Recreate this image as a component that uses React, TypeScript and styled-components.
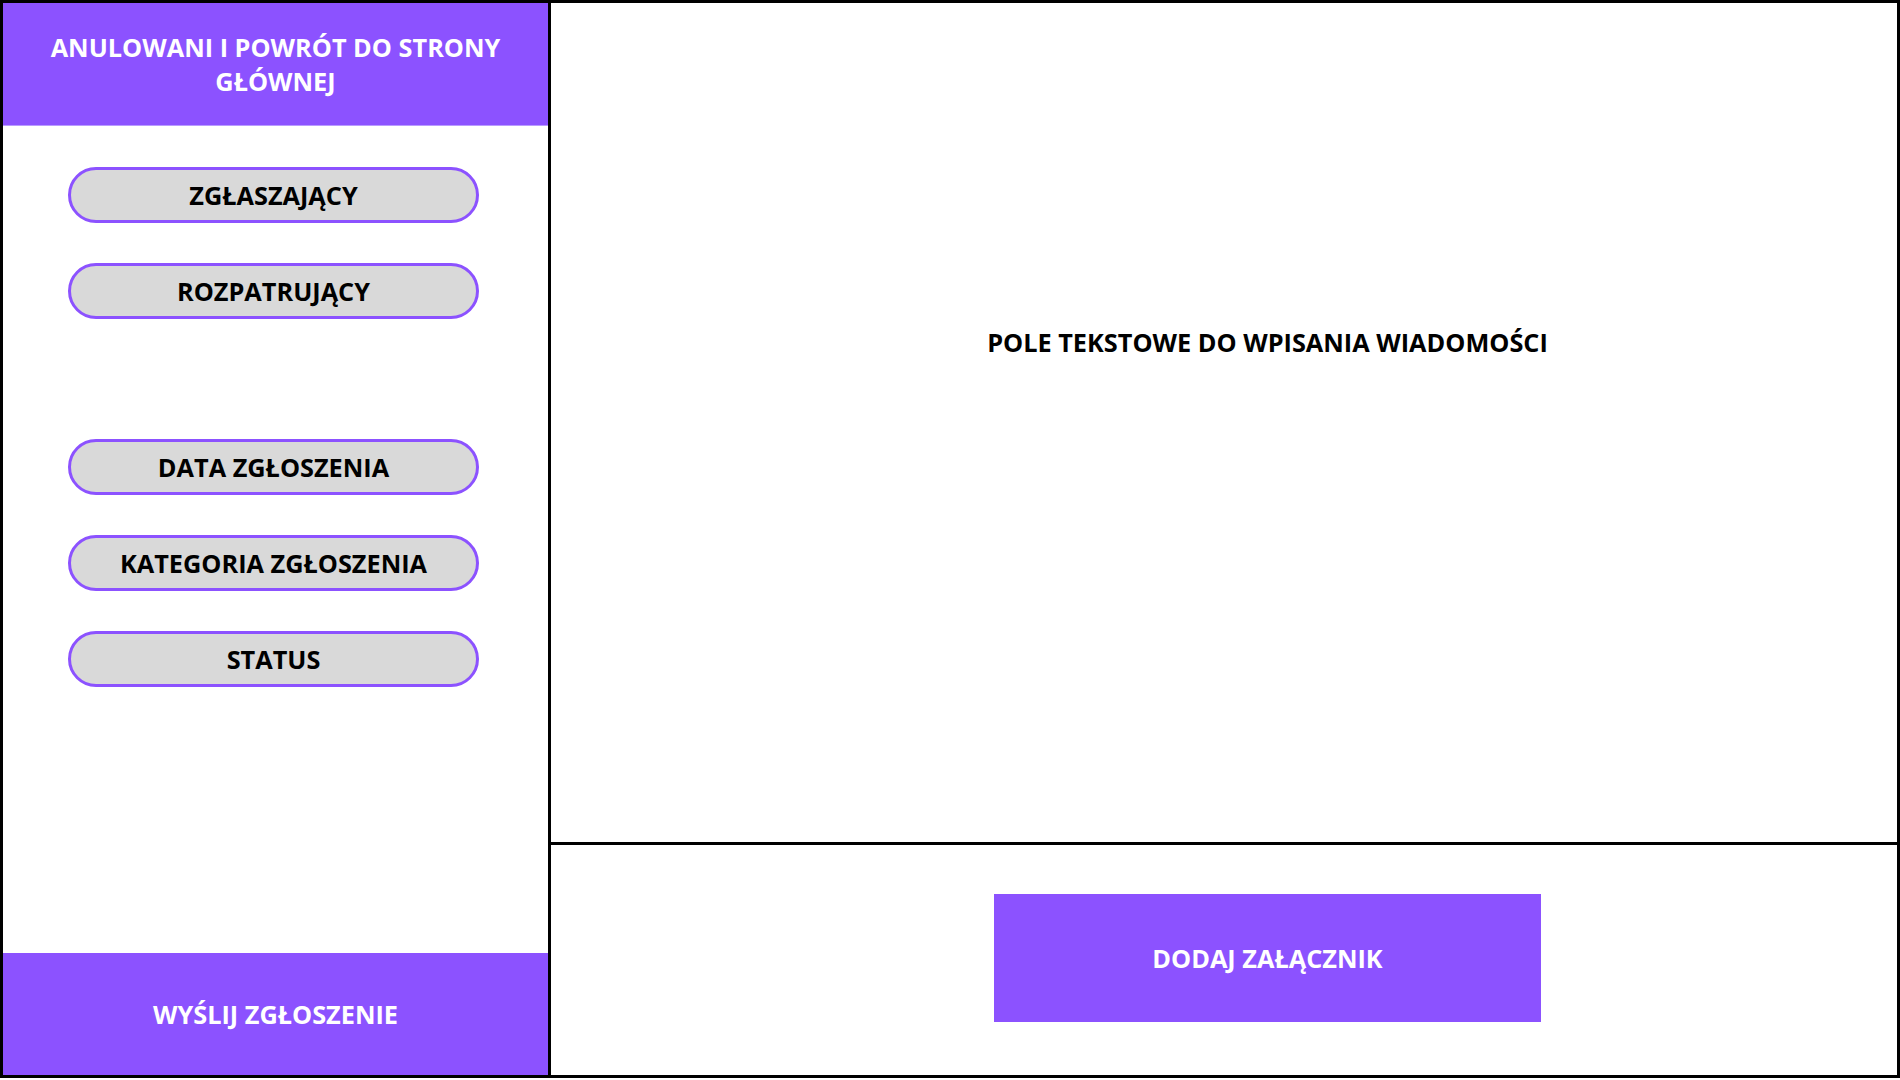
import React from "react";
import styled, { createGlobalStyle } from "styled-components";

const PURPLE = "#8c52ff";
const FONT_SIZE = "25.3px";

const Global = createGlobalStyle`
  html, body { margin: 0; padding: 0; background: #ffffff; }
  body { font-family: "Open Sans", "Liberation Sans", sans-serif; }
  * { box-sizing: border-box; }
`;

const Frame = styled.div`
  width: 1900px;
  height: 1078px;
  border: 3px solid #000;
  display: flex;
  background: #fff;
`;

const Sidebar = styled.aside`
  width: 545px;
  flex: none;
  display: flex;
  flex-direction: column;
`;

const Divider = styled.div`
  width: 3px;
  flex: none;
  background: #000;
`;

const PurpleBar = styled.div<{ $h: number }>`
  height: ${(p) => p.$h}px;
  flex: none;
  background: ${PURPLE};
  color: #fff;
  font-weight: 700;
  font-size: ${FONT_SIZE};
  line-height: 34.5px;
  text-align: center;
  display: flex;
  align-items: center;
  justify-content: center;
  padding: 0 36px;
  text-transform: uppercase;
`;

const HeaderBar = styled(PurpleBar)`
  border-bottom: 1px solid #b99bff;
`;

const Fields = styled.div`
  flex: 1;
  display: flex;
  flex-direction: column;
  padding: 41px 0 0 65px;
`;

const Pill = styled.div<{ $gapBefore?: number }>`
  width: 411px;
  height: 56px;
  margin-top: ${(p) => p.$gapBefore ?? 40}px;
  border: 3px solid ${PURPLE};
  border-radius: 28px;
  background: #d9d9d9;
  color: #000;
  font-weight: 700;
  font-size: ${FONT_SIZE};
  display: flex;
  align-items: center;
  justify-content: center;
  &:first-child { margin-top: 0; }
`;

const Main = styled.main`
  flex: 1;
  display: flex;
  flex-direction: column;
`;

const MessageArea = styled.section`
  height: 842px;
  flex: none;
  padding: 323px 0 0 87px;
  display: flex;
  justify-content: center;
  font-weight: 700;
  font-size: ${FONT_SIZE};
  line-height: 33px;
  color: #000;
  border-bottom: 3px solid #000;
`;

const AttachArea = styled.section`
  flex: 1;
  display: flex;
  align-items: center;
  justify-content: center;
  padding: 0 0 4px 87px;
`;

const AttachButton = styled.button`
  width: 547px;
  height: 128px;
  border: none;
  background: ${PURPLE};
  color: #fff;
  font-family: "Open Sans", "Liberation Sans", sans-serif;
  font-weight: 700;
  font-size: ${FONT_SIZE};
  cursor: pointer;
`;

export default function App() {
  return (
    <>
      <Global />
      <Frame>
        <Sidebar>
          <HeaderBar $h={123}>ANULOWANI I POWRÓT DO STRONY GŁÓWNEJ</HeaderBar>
          <Fields>
            <Pill>ZGŁASZAJĄCY</Pill>
            <Pill>ROZPATRUJĄCY</Pill>
            <Pill $gapBefore={120}>DATA ZGŁOSZENIA</Pill>
            <Pill>KATEGORIA ZGŁOSZENIA</Pill>
            <Pill>STATUS</Pill>
          </Fields>
          <PurpleBar $h={122}>WYŚLIJ ZGŁOSZENIE</PurpleBar>
        </Sidebar>
        <Divider />
        <Main>
          <MessageArea>POLE TEKSTOWE DO WPISANIA WIADOMOŚCI</MessageArea>
          <AttachArea>
            <AttachButton>DODAJ ZAŁĄCZNIK</AttachButton>
          </AttachArea>
        </Main>
      </Frame>
    </>
  );
}
